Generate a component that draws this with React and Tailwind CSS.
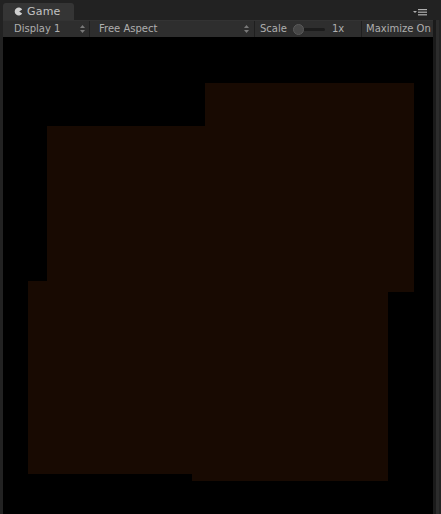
import React from 'react';

function Arrows() {
  return (
    <svg width="5" height="8" viewBox="0 0 5 8" className="shrink-0">
      <path d="M2.5 0 L5 3 L0 3 Z" fill="#7a7a7a" />
      <path d="M0 5 L5 5 L2.5 8 Z" fill="#7a7a7a" />
    </svg>
  );
}

function GameIcon() {
  return (
    <svg width="9" height="9" viewBox="0 0 9 9" className="shrink-0">
      <path d="M8.2 2.6 A4 4 0 1 0 8.2 6.4 L5.2 4.5 Z" fill="#cfcfcf" />
    </svg>
  );
}

function MenuIcon() {
  return (
    <svg width="15" height="7" viewBox="0 0 15 7">
      <path d="M0 2 L4 2 L2 4 Z" fill="#b0b0b0" />
      <rect x="5" y="0" width="9" height="1.2" fill="#b0b0b0" />
      <rect x="5" y="2.6" width="9" height="1.2" fill="#b0b0b0" />
      <rect x="5" y="5.2" width="9" height="1.2" fill="#b0b0b0" />
    </svg>
  );
}

const blocks = [
  { left: 202, top: 46, w: 209, h: 209 },
  { left: 44, top: 89, w: 200, h: 155 },
  { left: 25, top: 244, w: 180, h: 193 },
  { left: 189, top: 244, w: 196, h: 200 },
];

export default function App() {
  return (
    <div
      className="w-[441px] h-[514px] bg-[#222222] flex flex-col overflow-hidden select-none"
      style={{ fontFamily: '"DejaVu Sans", Verdana, sans-serif' }}
    >
      {/* Tab strip */}
      <div className="h-[20px] shrink-0 flex items-end pl-[3px] relative">
        <div className="w-[71px] h-[17px] bg-[#353535] rounded-t-[3px] flex items-center pl-[11px] gap-[4px]">
          <GameIcon />
          <span className="text-[11px] leading-none text-[#c2c2c2] tracking-[0.2px]">Game</span>
        </div>
        <div className="absolute right-[13px] top-[9px]">
          <MenuIcon />
        </div>
      </div>

      <div className="flex-1 flex min-h-0">
        <div className="w-[3px] bg-[#222222] shrink-0" />

        <div className="flex-1 flex flex-col min-w-0">
          {/* Toolbar */}
          <div className="h-[17px] shrink-0 bg-[#2e2e2e] flex items-center text-[10px] leading-none text-[#afafaf] border-t border-[#333333]">
            <div className="w-[87px] h-full flex items-center justify-between pl-[11px] pr-[4px] border-r border-[#1f1f1f]">
              <span>Display 1</span>
              <Arrows />
            </div>
            <div className="w-[165px] h-full flex items-center justify-between pl-[9px] pr-[5px] border-r border-[#1f1f1f]">
              <span>Free Aspect</span>
              <Arrows />
            </div>
            <div className="w-[107px] h-full flex items-center pl-[5px] border-r border-[#1f1f1f]">
              <span>Scale</span>
              <div className="relative ml-[6px] w-[32px] h-[11px] flex items-center">
                <div className="absolute left-[5px] right-0 h-[3px] rounded-full bg-[#1c1c1c]" />
                <div className="absolute left-0 w-[11px] h-[11px] rounded-full bg-[#474747] border border-[#5a5a5a]" />
              </div>
              <span className="ml-[7px]">1x</span>
            </div>
            <div className="flex-1 h-full flex items-center pl-[4px] whitespace-nowrap overflow-hidden">
              <span>Maximize On</span>
            </div>
          </div>

          {/* Game view */}
          <div className="flex-1 bg-black relative overflow-hidden">
            {blocks.map((b, i) => (
              <div
                key={i}
                className="absolute bg-[#180a02]"
                style={{ left: b.left, top: b.top, width: b.w, height: b.h }}
              />
            ))}
          </div>
        </div>

        {/* Right edge strip */}
        <div className="w-[8px] shrink-0 flex">
          <div className="w-[3px] bg-[#1a1a1a]" />
          <div className="w-[3px] bg-[#2c2c2c]" />
          <div className="w-[2px] bg-[#232323]" />
        </div>
      </div>
    </div>
  );
}
